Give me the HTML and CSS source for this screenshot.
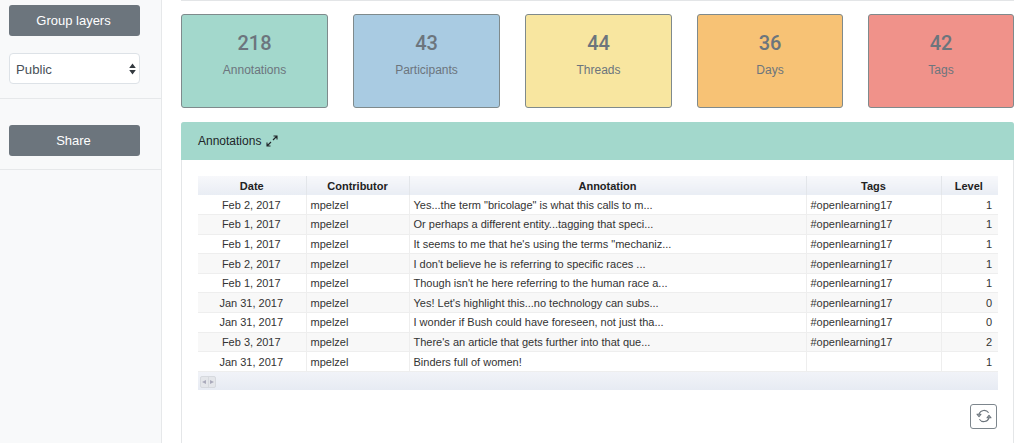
FILE: index.html
```html
<!DOCTYPE html>
<html lang="en">
<head>
<meta charset="utf-8">
<title>Annotations dashboard</title>
<link rel="stylesheet" href="styles.css">
</head>
<body>
<div class="app">
  <aside class="sidebar">
    <section class="side-group first">
      <button class="btn">Group layers</button>
      <div class="select">
        <span>Public</span>
        <svg class="updown" width="7" height="12" viewBox="0 0 7 12"><path d="M3.5 .5 6.8 5H.2zM3.5 11.5 .2 7h6.6z" fill="#343a40"/></svg>
      </div>
    </section>
    <section class="side-group second">
      <button class="btn">Share</button>
    </section>
  </aside>
  <main class="main">
    <div class="stats">
      <div class="stat teal"><strong>218</strong><span>Annotations</span></div>
      <div class="stat blue"><strong>43</strong><span>Participants</span></div>
      <div class="stat yellow"><strong>44</strong><span>Threads</span></div>
      <div class="stat orange"><strong>36</strong><span>Days</span></div>
      <div class="stat red"><strong>42</strong><span>Tags</span></div>
    </div>
    <section class="panel">
      <header class="panel-head">
        <span>Annotations</span>
        <svg width="12" height="12" viewBox="0 0 12 12" fill="none" stroke="#212529" stroke-width="1.1"><path d="M7 5 11 1M7.5 1H11V4.5M5 7 1 11M1 7.5V11H4.5"/></svg>
      </header>
      <div class="panel-body">
        <div class="grid">
          <table>
            <colgroup><col class="c1"><col class="c2"><col class="c3"><col class="c4"><col class="c5"></colgroup>
            <thead><tr><th>Date</th><th>Contributor</th><th>Annotation</th><th>Tags</th><th>Level</th></tr></thead>
            <tbody>
              <tr><td class="mid">Feb 2, 2017</td><td>mpelzel</td><td>Yes...the term "bricolage" is what this calls to m...</td><td>#openlearning17</td><td class="end">1</td></tr>
              <tr><td class="mid">Feb 1, 2017</td><td>mpelzel</td><td>Or perhaps a different entity...tagging that speci...</td><td>#openlearning17</td><td class="end">1</td></tr>
              <tr><td class="mid">Feb 1, 2017</td><td>mpelzel</td><td>It seems to me that he's using the terms "mechaniz...</td><td>#openlearning17</td><td class="end">1</td></tr>
              <tr><td class="mid">Feb 2, 2017</td><td>mpelzel</td><td>I don't believe he is referring to specific races ...</td><td>#openlearning17</td><td class="end">1</td></tr>
              <tr><td class="mid">Feb 1, 2017</td><td>mpelzel</td><td>Though isn't he here referring to the human race a...</td><td>#openlearning17</td><td class="end">1</td></tr>
              <tr><td class="mid">Jan 31, 2017</td><td>mpelzel</td><td>Yes! Let's highlight this...no technology can subs...</td><td>#openlearning17</td><td class="end">0</td></tr>
              <tr><td class="mid">Jan 31, 2017</td><td>mpelzel</td><td>I wonder if Bush could have foreseen, not just tha...</td><td>#openlearning17</td><td class="end">0</td></tr>
              <tr><td class="mid">Feb 3, 2017</td><td>mpelzel</td><td>There's an article that gets further into that que...</td><td>#openlearning17</td><td class="end">2</td></tr>
              <tr><td class="mid">Jan 31, 2017</td><td>mpelzel</td><td>Binders full of women!</td><td></td><td class="end">1</td></tr>
            </tbody>
          </table>
          <div class="pager">
            <div class="arrows">
              <span><svg width="4" height="4" viewBox="0 0 4 4"><path d="M0 2 4 0V4z" fill="#aab"/></svg></span>
              <span><svg width="4" height="4" viewBox="0 0 4 4"><path d="M4 2 0 0V4z" fill="#aab"/></svg></span>
            </div>
          </div>
        </div>
        <div class="tools">
          <button class="refresh" aria-label="Refresh">
            <svg width="16" height="16" viewBox="0 0 16 16" fill="none" stroke="#6c757d" stroke-width="1.1"><path d="M3 6A5.4 5.4 0 0 1 12.6 4.8"/><path d="M13 10A5.4 5.4 0 0 1 3.4 11.2"/><path d="M1 6.2H5L3 8.6zM15 9.8H11L13 7.4z" stroke-linejoin="round"/></svg>
          </button>
        </div>
      </div>
    </section>
  </main>
</div>
</body>
</html>
```
FILE: styles.css
```css
* { box-sizing: border-box; }
html, body { margin: 0; height: 100%; overflow: hidden; background: #fff; }
body { font-family: "Liberation Sans", Arial, sans-serif; color: #212529; }
.app { display: flex; height: 443px; }

.sidebar { width: 162px; flex: none; background: #f8f9fa; border-right: 1px solid #e6e8ea; }
.side-group { padding: 0 21px 0 9px; border-bottom: 1px solid #e6e8ea; }
.side-group.first { padding-top: 5px; height: 99px; }
.side-group.second { padding-top: 26px; height: 71px; }
.btn {
  display: block; width: 131px; height: 31px; border: 0; border-radius: 3px;
  background: #6c757d; color: #fff; font: 13px/32px "Liberation Sans", Arial, sans-serif; padding: 0 2px 0 0;
}
.select {
  display: flex; align-items: center; justify-content: space-between;
  width: 131px; height: 31px; margin-top: 17px; padding: 1px 3px 0 6px;
  background: #fff; border: 1px solid #dde2e7; border-radius: 4px;
  font-size: 13.2px; color: #495057;
}

.main { flex: 1; min-width: 0; padding: 0 10px 0 19px; }
.stats {
  display: flex; justify-content: space-between; padding-top: 14px;
  border-top: 1px solid #e3e5e7; height: 108px;
}
.stat {
  width: 147px; height: 94px; margin-top: -1px; padding-top: 16px;
  display: flex; flex-direction: column; align-items: center;
  border: 1px solid #7f8a8c; border-radius: 3px;
  color: #6c757d;
}
.stat:nth-child(n+4) { width: 146px; }
.stat strong { font-family: Roboto, "Liberation Sans", sans-serif; font-size: 20px; line-height: 24px; font-weight: 500; color: #6c757d; }
.stat span { font-size: 12px; line-height: 14px; margin-top: 8px; }
.teal { background: #a3d8cc; }
.blue { background: #a9cbe2; }
.yellow { background: #f8e6a0; }
.orange { background: #f7c275; }
.red { background: #f0928a; }

.panel {
  margin-top: 14px; height: 330px;
  border: 1px solid #e4e6e8; border-bottom: 0; border-radius: 3px 3px 0 0;
}
.panel-head {
  height: 38px; margin: -1px -1px 0; padding: 0 17px;
  display: flex; align-items: center; gap: 5px;
  background: #a3d8cc; border-radius: 3px 3px 0 0;
  font-size: 12px;
}
.panel-body { padding: 16px 16px 0; }
.grid { width: 800px; }
table { width: 800px; border-collapse: collapse; table-layout: fixed; font-size: 11px; }
.c1 { width: 108px; } .c2 { width: 103px; } .c3 { width: 397px; } .c4 { width: 135px; } .c5 { width: 57px; }
th {
  height: 19px; padding: 0; font-weight: 700; text-align: center; color: #222;
  background: linear-gradient(#f7f8fb, #e9edf4);
  border-right: 1px solid #e3e6ea;
}
th:last-child, td:last-child { border-right: 0; }
th:last-child { padding-right: 2px; }
td {
  height: 19.6px; padding: 0 4px; color: #333; white-space: nowrap; overflow: hidden;
  border-right: 1px solid #eee; border-bottom: 1px solid #eee;
}
tbody tr:nth-child(even) td { background: #f8f8f8; }
td.mid { text-align: center; padding-right: 5px; }
td.end { text-align: right; padding-right: 6px; }
.pager {
  height: 18px; padding: 4px 0 0 2px;
  background: linear-gradient(#f1f3f8, #e7ebf3);
}
.arrows { display: flex; width: 16px; height: 12px; border: 1px solid #d6d9de; border-radius: 2px; background: #e4e6ea; }
.arrows span { flex: 1; display: flex; align-items: center; justify-content: center; }
.arrows span + span { border-left: 1px solid #d6d9de; }
.tools { display: flex; justify-content: flex-end; margin-top: 14px; padding-right: 1px; width: 800px; }
.refresh {
  width: 27px; height: 25px; padding: 0; display: flex; align-items: center; justify-content: center;
  background: #fff; border: 1px solid #7d868d; border-radius: 3px;
}
```
